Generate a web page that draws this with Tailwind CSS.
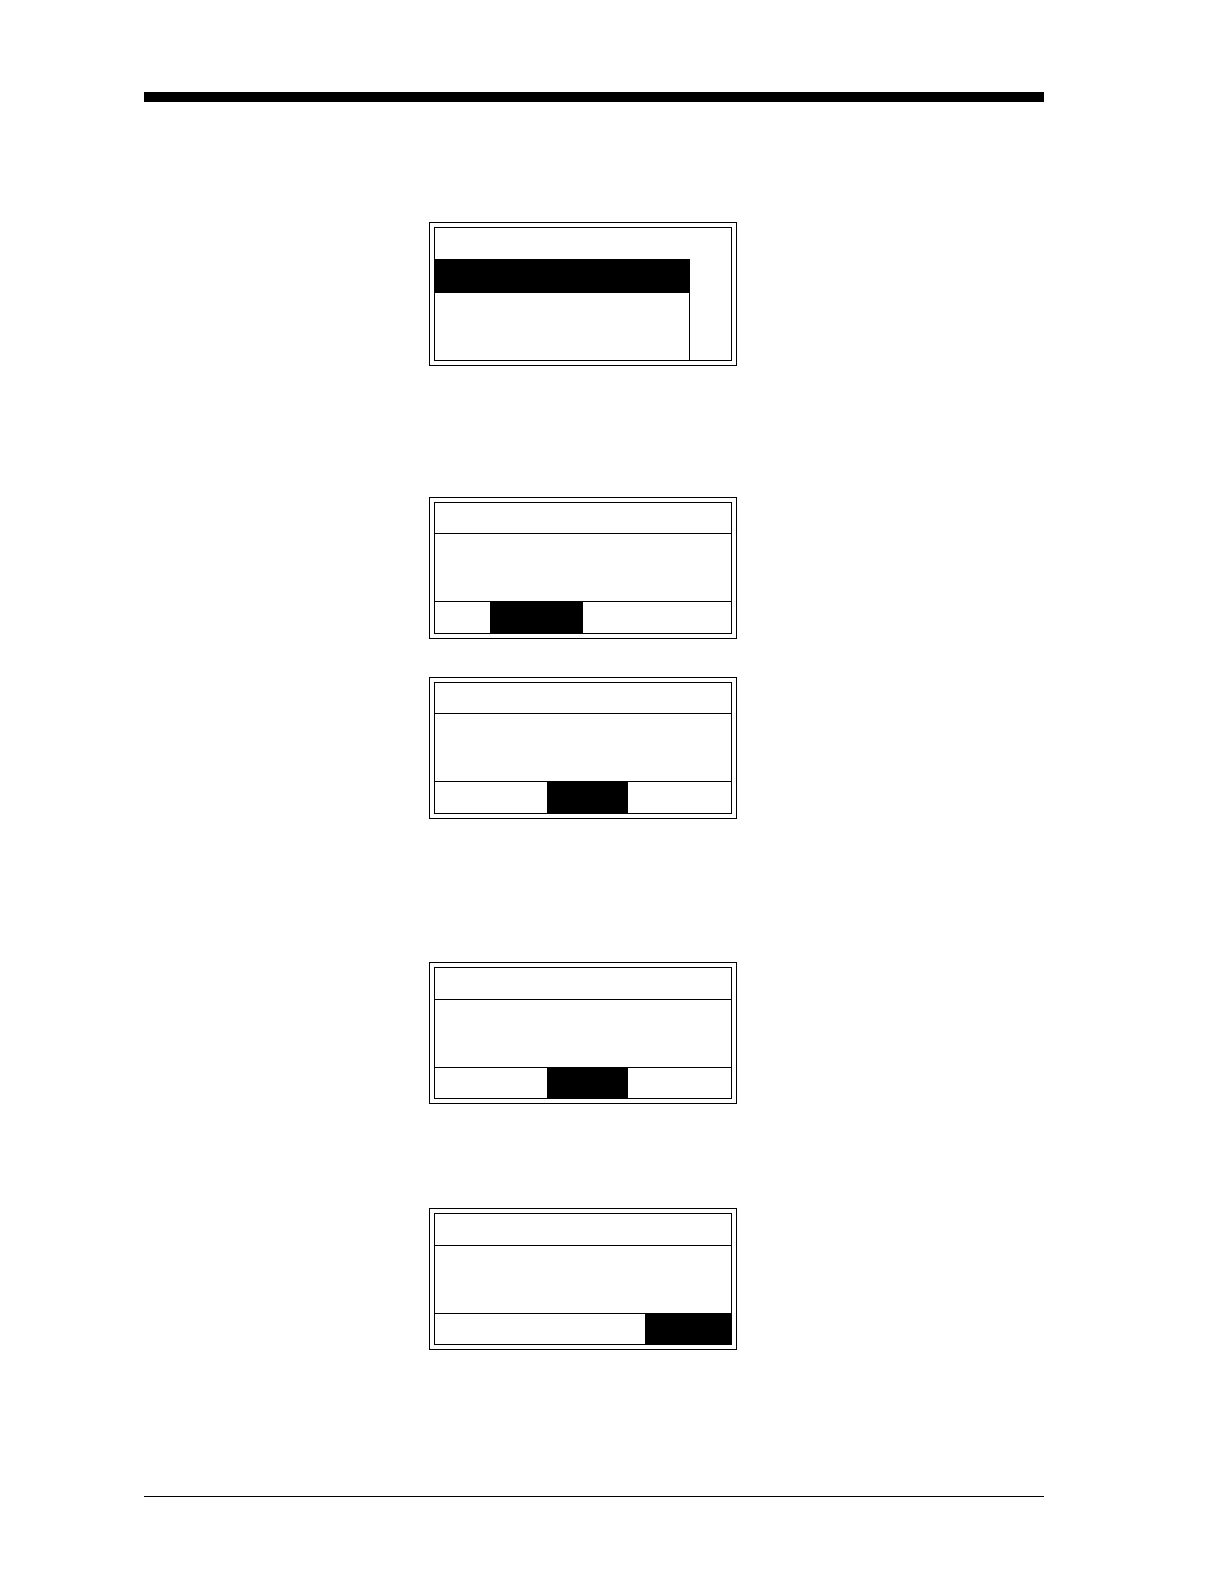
<!DOCTYPE html>
<html lang="en">
<head>
<meta charset="utf-8">
<meta name="viewport" content="width=device-width, initial-scale=1">
<title>Display panels</title>
<script src="https://cdn.jsdelivr.net/npm/@tailwindcss/browser@4"></script>
</head>
<body class="bg-white text-black">
<div class="flex min-h-screen flex-col pt-[92px] pr-[180px] pb-[87px] pl-36">
  <header class="h-2.5 bg-black"></header>

  <main class="flex grow flex-col pt-[120px] pb-[146px] pl-[285px]">
    <!-- List display: first row selected, narrow column on the right -->
    <section class="w-[308px] border border-black p-1">
      <div class="border border-black">
        <div class="h-[31px]"></div>
        <div class="w-[255px] border-r border-black">
          <div class="h-[34px] bg-black"></div>
          <div class="h-[67px]"></div>
        </div>
      </div>
    </section>

    <!-- Second option selected -->
    <section class="mt-[131px] w-[308px] border border-black p-1">
      <div class="border border-black">
        <div class="h-[31px] border-b border-black"></div>
        <div class="h-[68px] border-b border-black"></div>
        <div class="flex h-[31px] pl-[55px]"><div class="w-[93px] bg-black"></div></div>
      </div>
    </section>

    <!-- Third option selected -->
    <section class="mt-[38px] w-[308px] border border-black p-1">
      <div class="border border-black">
        <div class="h-[31px] border-b border-black"></div>
        <div class="h-[68px] border-b border-black"></div>
        <div class="flex h-[31px] pl-28"><div class="w-[81px] bg-black"></div></div>
      </div>
    </section>

    <section class="mt-[143px] w-[308px] border border-black p-1">
      <div class="border border-black">
        <div class="h-8 border-b border-black"></div>
        <div class="h-[68px] border-b border-black"></div>
        <div class="flex h-[30px] pl-28"><div class="w-[81px] bg-black"></div></div>
      </div>
    </section>

    <!-- Last option selected -->
    <section class="mt-[104px] w-[308px] border border-black p-1">
      <div class="border border-black">
        <div class="h-8 border-b border-black"></div>
        <div class="h-[68px] border-b border-black"></div>
        <div class="flex h-[30px] pl-[210px]"><div class="grow bg-black"></div></div>
      </div>
    </section>
  </main>

  <footer class="h-px bg-black"></footer>
</div>
</body>
</html>
